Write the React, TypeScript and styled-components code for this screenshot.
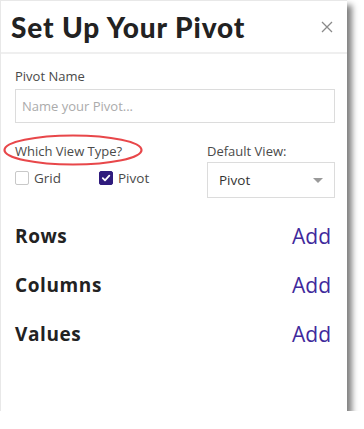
import React from 'react';
import styled, { createGlobalStyle } from 'styled-components';

const GlobalStyle = createGlobalStyle`
  html, body {
    margin: 0;
    padding: 0;
    background: #ffffff;
  }
  body {
    font-family: "Open Sans", Lato, Arial, sans-serif;
  }
`;

const sections = ['Rows', 'Columns', 'Values'];

const App = () => {
    return (
        <>
            <GlobalStyle />
            <Panel>
                <Header>
                    <Title>Set Up Your Pivot</Title>
                    <Close aria-label="close">
                        <svg width="12" height="12" viewBox="0 0 12 12">
                            <path d="M1 1 L11 11 M11 1 L1 11" stroke="#8a8a8a" strokeWidth="1.3" fill="none" />
                        </svg>
                    </Close>
                </Header>
                <Body>
                    <Field>
                        <Label>Pivot Name</Label>
                        <TextInput placeholder="Name your Pivot..." />
                    </Field>
                    <ViewRow>
                        <ViewTypeGroup>
                            <Circled>
                                <Label>Which View Type?</Label>
                                <Ring viewBox="0 0 140 32" preserveAspectRatio="none">
                                    <ellipse cx="70" cy="16" rx="68.5" ry="14.5" stroke="#e8474a" strokeWidth="2.2" fill="none" />
                                </Ring>
                            </Circled>
                            <Checks>
                                <Check>
                                    <Box />
                                    Grid
                                </Check>
                                <Check>
                                    <Box checked>
                                        <svg width="10" height="10" viewBox="0 0 10 10">
                                            <path d="M1.8 5.2 L4 7.3 L8.3 2.6" stroke="#fff" strokeWidth="1.8" fill="none" strokeLinecap="round" strokeLinejoin="round" />
                                        </svg>
                                    </Box>
                                    Pivot
                                </Check>
                            </Checks>
                        </ViewTypeGroup>
                        <DefaultGroup>
                            <Label>Default View:</Label>
                            <Select>
                                <span>Pivot</span>
                                <Caret />
                            </Select>
                        </DefaultGroup>
                    </ViewRow>
                    <Sections>
                        {sections.map((name) => (
                            <SectionRow key={name}>
                                <SectionName>{name}</SectionName>
                                <AddLink href="#">Add</AddLink>
                            </SectionRow>
                        ))}
                    </Sections>
                </Body>
            </Panel>
        </>
    )
}

const Panel = styled.div`
width: 347px;
height: 411px;
background: #fff;
border-top: 1px solid #e8e8e8;
border-left: 1px solid #e8e8e8;
box-shadow: 5px 5px 6px rgba(0, 0, 0, 0.5);
box-sizing: border-box;
`;

const Header = styled.div`
height: 51px;
display: flex;
align-items: center;
justify-content: space-between;
padding: 0 14px 0 10px;
border-bottom: 2px solid #efefef;
box-sizing: content-box;
`;

const Title = styled.h1`
margin: 0;
font-family: Lato, "Open Sans", Arial, sans-serif;
font-size: 28px;
line-height: 34px;
font-weight: 900;
color: #222;
letter-spacing: 0.9px;
`;

const Close = styled.button`
border: none;
background: none;
padding: 0;
display: flex;
margin-top: 1px;
`;

const Body = styled.div`
padding: 13px 12px 0 14px;
`;

const Field = styled.div`
display: flex;
flex-direction: column;
gap: 4px;
`;

const Label = styled.div`
font-size: 13px;
color: #4a4a4a;
line-height: 18px;
`;

const TextInput = styled.input`
height: 34px;
border: 1px solid #dcdcdc;
padding: 0 6px;
font-family: inherit;
font-size: 13px;
color: #333;
box-sizing: border-box;
outline: none;

&::placeholder {
    color: #ababab;
}
`;

const ViewRow = styled.div`
display: flex;
justify-content: space-between;
margin-top: 19px;
`;

const ViewTypeGroup = styled.div`
display: flex;
flex-direction: column;
`;

const Circled = styled.div`
position: relative;
`;

const Ring = styled.svg`
position: absolute;
left: -12px;
top: -8px;
width: 140px;
height: 32px;
overflow: visible;
`;

const Checks = styled.div`
display: flex;
gap: 38px;
margin-top: 9px;
`;

const Check = styled.label`
display: flex;
align-items: center;
gap: 5px;
font-size: 13.5px;
line-height: 18px;
color: #4a4a4a;
`;

const Box = styled.span<{checked?: boolean}>`
width: 12px;
height: 12px;
border-radius: 2px;
border: 1px solid ${p => p.checked ? '#2f1b7d' : '#c8c8c8'};
background: ${p => p.checked ? '#2f1b7d' : '#fff'};
display: flex;
align-items: center;
justify-content: center;
`;

const DefaultGroup = styled.div`
display: flex;
flex-direction: column;
gap: 2px;
width: 128px;
`;

const Select = styled.div`
height: 36px;
border: 1px solid #dcdcdc;
display: flex;
align-items: center;
justify-content: space-between;
padding: 0 11px 0 11px;
font-size: 13.5px;
color: #333;
box-sizing: border-box;
`;

const Caret = styled.span`
width: 0;
height: 0;
border-left: 5px solid transparent;
border-right: 5px solid transparent;
border-top: 5px solid #9a9a9a;
`;

const Sections = styled.div`
display: flex;
flex-direction: column;
gap: 27px;
margin-top: 27px;
`;

const SectionRow = styled.div`
display: flex;
justify-content: space-between;
align-items: center;
line-height: 22px;
padding-right: 4px;
`;

const SectionName = styled.div`
font-size: 19px;
font-weight: 700;
color: #222;
letter-spacing: 0.6px;
`;

const AddLink = styled.a`
font-size: 21px;
color: #3f2a9c;
text-decoration: none;
`;

export default App;
